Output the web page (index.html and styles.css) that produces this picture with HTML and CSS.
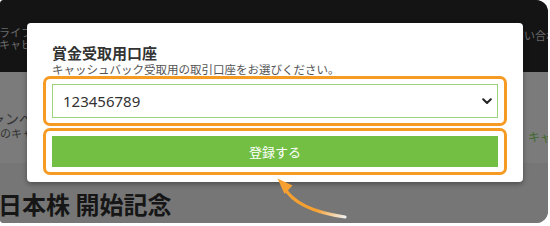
FILE: index.html
```html
<!DOCTYPE html>
<html lang="ja">
<head>
<meta charset="utf-8">
<link rel="stylesheet" href="styles.css">
</head>
<body>
<div class="frame">
  <header class="hdr">
    <div class="hdr-left">
      <span>ライフスタイル</span>
      <span>キャビネット</span>
    </div>
    <div class="hdr-right">お問い合わせ</div>
  </header>
  <section class="sec1">
    <div class="camp">キャンペーン</div>
    <div class="sub-row">
      <span class="sub-left">対象のキャッシュバック</span>
      <span class="sub-right">。キャッシュ</span>
    </div>
  </section>
  <section class="sec2">
    <h2 class="big">日本株 開始記念</h2>
  </section>

  <div class="modal">
    <h3 class="m-title">賞金受取用口座</h3>
    <p class="m-sub">キャッシュバック受取用の取引口座をお選びください。</p>
    <div class="hl">
      <div class="sel-wrap">
        <select class="sel">
          <option>123456789</option>
        </select>
        <svg class="chev" width="10" height="7" viewBox="0 0 10 7"><path d="M1.2 1.2 L5 5 L8.8 1.2" fill="none" stroke="#222" stroke-width="2" stroke-linecap="round" stroke-linejoin="round"/></svg>
      </div>
    </div>
    <div class="hl hl-btn">
      <button class="btn">登録する</button>
    </div>
  </div>

  <svg class="arrow" width="90" height="56" viewBox="0 0 90 56">
    <defs>
      <linearGradient id="g" x1="10" y1="15" x2="76" y2="47" gradientUnits="userSpaceOnUse">
        <stop offset="0" stop-color="#f5a030"/>
        <stop offset="0.6" stop-color="#f5a030"/>
        <stop offset="1" stop-color="#fff" stop-opacity="0.9"/>
      </linearGradient>
    </defs>
    <path d="M14 17 Q26 40 75 47" fill="none" stroke="url(#g)" stroke-width="3.2" stroke-linecap="round"/>
    <path d="M7.5 8.5 L22.5 15.5 L14.5 24 Z" fill="#f5a030"/>
  </svg>
</div>
</body>
</html>
```
FILE: styles.css
```css
* { box-sizing: border-box; }
html, body { margin: 0; padding: 0; background: #fff; }
body { font-family: "Noto Sans", "Noto Sans CJK JP", sans-serif; }

.frame {
  position: relative;
  width: 548px;
  height: 223px;
  border-radius: 4px 12px 12px 4px;
  overflow: hidden;
  background: #777;
}

.hdr {
  height: 72px;
  background: #141414;
  display: flex;
  justify-content: space-between;
  padding-top: 26px;
  font-family: "Noto Sans CJK JP", sans-serif;
  font-size: 11px;
  color: #6a6a6a;
}
.hdr-left { display: flex; flex-direction: column; line-height: 12px; margin-left: -1px; }
.hdr-right { line-height: 12px; margin-top: 3px; margin-right: -20px; white-space: nowrap; }

.sec1 {
  height: 91px;
  background: #7b7b7b;
  padding-top: 38px;
  font-family: "Noto Sans CJK JP", sans-serif;
  color: #333;
}
.camp { font-size: 14px; line-height: 16px; margin-left: -23px; white-space: nowrap; }
.sub-row { display: flex; justify-content: space-between; font-size: 11px; line-height: 14px; }
.sub-left { margin-left: -22px; white-space: nowrap; }
.sub-right { margin-right: -40px; margin-top: 4px; font-size: 12px; color: #3f6a2c; white-space: nowrap; }

.sec2 { height: 60px; background: #767676; padding-top: 25px; }
.big {
  margin: 0 0 0 -2px;
  font-family: "Noto Sans CJK JP", sans-serif;
  font-weight: 700;
  font-size: 24px;
  line-height: 32px;
  color: #161616;
  white-space: nowrap;
}

.modal {
  position: absolute;
  left: 27px;
  top: 23px;
  width: 496px;
  background: #fff;
  border-radius: 4px;
  box-shadow: 0 2px 5px rgba(0,0,0,0.35);
  padding: 21px 16px 7px;
  font-family: "Noto Sans CJK JP", sans-serif;
}
.m-title {
  margin: 0;
  padding-left: 9px;
  font-size: 15px;
  line-height: 18px;
  font-weight: 700;
  color: #333;
}
.m-sub {
  margin: 0;
  padding-left: 9px;
  font-size: 11.5px;
  line-height: 14px;
  color: #555;
  white-space: nowrap;
}
.hl {
  border: 3px solid #f59a23;
  border-radius: 7px;
  padding: 5px 6px;
  background: #fff;
}
.hl-btn { margin-top: 2px; }
.sel-wrap { position: relative; }
.sel {
  display: block;
  width: 100%;
  height: 34px;
  -webkit-appearance: none;
  appearance: none;
  border: 1px solid #9bd47c;
  border-radius: 0;
  background: #fff;
  padding: 0 10px;
  font-family: "Noto Sans", sans-serif;
  font-size: 15px;
  color: #333;
  outline: none;
}
.chev { position: absolute; right: 6px; top: 14px; }
.btn {
  display: block;
  width: 100%;
  height: 31px;
  border: 0;
  border-radius: 0;
  background: #72bf44;
  color: #fff;
  font-family: "Noto Sans CJK JP", sans-serif;
  font-size: 13px;
  padding: 0;
}

.arrow { position: absolute; left: 270px; top: 170px; }
```
